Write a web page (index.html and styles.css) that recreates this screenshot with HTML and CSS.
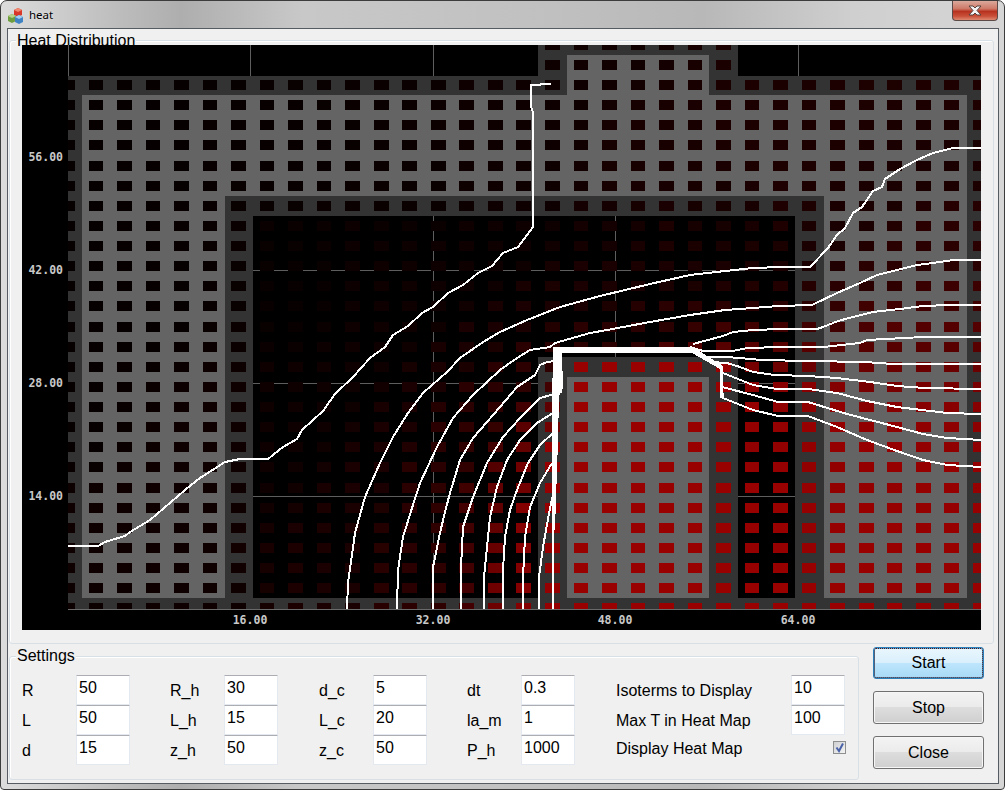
FILE: index.html
```html
<!DOCTYPE html>
<html lang="en">
<head>
    <meta charset="UTF-8">
    <title>heat</title>
    <link rel="stylesheet" href="styles.css">
</head>
<body>
    <div class="window">
        <div class="titlebar">
            <svg class="app-icon" width="16" height="17" viewBox="0 0 16 17">
                <polygon points="6,3 10,1 14,3 14,8 10,10 6,8" fill="#d8372a"/>
                <polygon points="6,3 10,5 14,3 10,1" fill="#f08a70"/>
                <polygon points="0,9 4,7 8,9 8,14 4,16 0,14" fill="#6f9e3f"/>
                <polygon points="0,9 4,11 8,9 4,7" fill="#b5d48a"/>
                <polygon points="7,10 11,8 15,10 15,15 11,17 7,15" fill="#3f83c4"/>
                <polygon points="7,10 11,12 15,10 11,8" fill="#a4cdf0"/>
            </svg>
            <span class="title-text">heat</span>
            <div class="close-btn">
                <svg width="18" height="11" viewBox="0 0 18 11">
                    <path d="M3 1 H7 L9 3 L11 1 H15 L11 5.5 L15 10 H11 L9 8 L7 10 H3 L7 5.5 Z" fill="#f4f4f4" stroke="#55423f" stroke-width="1"/>
                </svg>
            </div>
        </div>

        <div class="client">
            <div class="group heat-group">
                <span class="group-title">Heat Distribution</span>
                <svg id="chart" class="chart" width="959" height="585" viewBox="22 45 959 585" shape-rendering="crispEdges">
                    <rect x="22" y="45" width="959" height="585" fill="#000"/>
                    <g stroke="#5e5e5e" stroke-width="1">
                        <path d="M68.5 45V609M250.5 45V609M433.5 45V609M615.5 45V609M798.5 45V609"/>
                        <path d="M68 270.5H981M68 383.5H981M68 496.5H981"/>
                    </g>
                    <path fill="#333" fill-rule="evenodd" d="M68 76H538V45H738V76H981V609H68Z M253 216H795V598H738V357H538V598H253Z"/>
                    <path fill="#646464" d="M82 95H567V55H709V95H967V598H824V196H225V598H82Z"/>
                    <path fill="#646464" d="M567 377H709V598H567Z"/>
                    <g id="dots"></g>
                    <path d="M68 609.5H981" stroke="#6a6a6a" stroke-width="1"/>
                    <g id="isoterms" fill="none" stroke="#fff" stroke-width="2"></g>
                    <path fill="#fff" d="M553 347H693L723 366V398H720V369L692 353H562L563 388L559 396L558 440L555 530H552V410Z"/>
                    <g class="axis-y">
                        <text x="63" y="161">56.00</text>
                        <text x="63" y="274">42.00</text>
                        <text x="63" y="387">28.00</text>
                        <text x="63" y="500">14.00</text>
                    </g>
                    <g class="axis-x">
                        <text x="250" y="624">16.00</text>
                        <text x="433" y="624">32.00</text>
                        <text x="615" y="624">48.00</text>
                        <text x="798" y="624">64.00</text>
                    </g>
                </svg>
            </div>

            <div class="bottom-row">
                <div class="group settings">
                    <span class="group-title">Settings</span>
                    <div class="setting-col">
                        <label>R</label><input type="text" value="50">
                        <label>L</label><input type="text" value="50">
                        <label>d</label><input type="text" value="15">
                    </div>
                    <div class="setting-col">
                        <label>R_h</label><input type="text" value="30">
                        <label>L_h</label><input type="text" value="15">
                        <label>z_h</label><input type="text" value="50">
                    </div>
                    <div class="setting-col">
                        <label>d_c</label><input type="text" value="5">
                        <label>L_c</label><input type="text" value="20">
                        <label>z_c</label><input type="text" value="50">
                    </div>
                    <div class="setting-col">
                        <label>dt</label><input type="text" value="0.3">
                        <label>la_m</label><input type="text" value="1">
                        <label>P_h</label><input type="text" value="1000">
                    </div>
                    <div class="setting-col wide">
                        <label>Isoterms to Display</label><input type="text" value="10">
                        <label>Max T in Heat Map</label><input type="text" value="100">
                        <label class="check-label">Display Heat Map</label>
                        <span class="check">
                            <svg width="11" height="11" viewBox="0 0 11 11"><path d="M2.5 5.5L5 9L9 1.5" fill="none" stroke="#4a62a8" stroke-width="2"/></svg>
                        </span>
                    </div>
                </div>
                <div class="buttons">
                    <button class="btn focused" type="button">Start</button>
                    <button class="btn" type="button">Stop</button>
                    <button class="btn" type="button">Close</button>
                </div>
            </div>
        </div>
    </div>
    <script src="heat.js"></script>
</body>
</html>
```
FILE: styles.css
```css
html, body {
    margin: 0;
    background: #fff;
    overflow: hidden;
}
body {
    font-family: "Liberation Sans", Arial, sans-serif;
    font-size: 16px;
    color: #000;
}
.window {
    box-sizing: border-box;
    width: 1005px;
    height: 790px;
    border: 1px solid #3c3c3c;
    border-radius: 7px 7px 4px 4px;
    padding: 0 5px 5px 6px;
    background:
        linear-gradient(to right, #dcdcdc 0, #bcbcbc 12%, #aeaeae 18%, #c8c8c8 30%, #c0c0c0 55%, #b8b8b8 70%, #cfcfcf 85%, #d6d6d6 100%);
}
.titlebar {
    display: flex;
    align-items: flex-start;
    height: 27px;
}
.app-icon {
    margin: 6px 0 0 1px;
}
.title-text {
    margin: 6px 0 0 5px;
    font-family: "Noto Sans", sans-serif;
    font-size: 11.5px;
    line-height: 16px;
    text-shadow: 0 0 3px #eee;
}
.close-btn {
    margin-left: auto;
    margin-right: 1px;
    display: flex;
    align-items: center;
    justify-content: center;
    width: 44px;
    height: 19px;
    border: 1px solid #5b4a48;
    border-top: 0;
    border-radius: 0 0 4px 4px;
    background: linear-gradient(to bottom, #dba99c 0, #cf7a68 40%, #b8331f 55%, #c9503a 80%, #dd8a70 100%);
}
.client {
    box-sizing: border-box;
    height: 756px;
    border: 1px solid #565c62;
    background: #f0f0f0;
    padding: 11px 0 0 1px;
}
.group {
    position: relative;
    box-sizing: border-box;
    border: 1px solid #d8e0e6;
    border-radius: 3px;
    box-shadow: inset 1px 1px 0 #fff;
}
.group-title {
    position: absolute;
    left: 6px;
    top: -9px;
    padding: 0 1px;
    background: #f0f0f0;
    line-height: 17px;
    white-space: nowrap;
}
.heat-group {
    width: 985px;
    height: 604px;
    padding: 4px 12px;
}
.chart {
    position: relative;
    display: block;
}
.chart text {
    font-family: "DejaVu Sans Mono", monospace;
    font-size: 11.5px;
    font-weight: bold;
    fill: #c8c8c8;
    shape-rendering: auto;
}
.axis-y text {
    text-anchor: end;
}
.axis-x text {
    text-anchor: middle;
}
.bottom-row {
    display: flex;
    margin-top: 3px;
}
.settings {
    display: flex;
    gap: 40px;
    width: 850px;
    height: 124px;
    margin-top: 9px;
    padding: 18px 0 0 12px;
}
.settings .group-title {
    top: -10px;
}
.setting-col {
    display: grid;
    grid-template-columns: 54px 54px;
    grid-auto-rows: 30px;
    align-items: center;
}
.setting-col:nth-child(even):not(:nth-child(2)) {
    margin-left: 1px;
}
.setting-col.wide {
    grid-template-columns: 175px 54px;
}
.setting-col label {
    padding-top: 2px;
    line-height: 20px;
    white-space: nowrap;
}
.setting-col .check-label {
    padding: 0 0 4px;
    margin-top: 2px;
}
.setting-col input {
    box-sizing: border-box;
    width: 54px;
    height: 30px;
    margin: 0;
    padding: 0 2px 5px;
    border: 1px solid #e3e9ef;
    border-top-color: #abadb3;
    border-radius: 1px;
    background: #fff;
    font: inherit;
    color: #000;
    outline: none;
}
.check {
    box-sizing: border-box;
    display: flex;
    width: 13px;
    height: 13px;
    margin: 0 0 6px 42px;
    border: 1px solid #8e8f8f;
    background: linear-gradient(to bottom right, #cfd0d2, #f4f4f4);
}
.buttons {
    display: flex;
    flex-direction: column;
    gap: 12px;
    margin-left: 14px;
}
.btn {
    box-sizing: border-box;
    width: 111px;
    height: 33px;
    padding: 0;
    border: 1px solid #707070;
    border-radius: 3px;
    background: linear-gradient(to bottom, #f3f3f3 0, #ebebeb 49%, #dddddd 50%, #cfcfcf 100%);
    box-shadow: inset 0 0 0 1px #f6f6f6;
    font: inherit;
    color: #000;
}
.btn.focused {
    height: 32px;
    border-color: #2c7fb8;
    background: linear-gradient(to bottom, #eaf6fd 0, #d9f0fc 49%, #bee6fd 50%, #a7d9f5 100%);
    box-shadow: inset 0 0 0 1px #4fb0e0;
    outline: 1px dotted #5a1010;
    outline-offset: -2px;
}
```
FILE: heat.js
```js
// plot scale, cells are 2.5 units wide
const plot = { left: 68, right: 981, top: 45, bottom: 609 };
const cellW = 28.53;
const cellH = 20.13;

// isoterms, page coordinates, coldest first. red = dot colour next to the line
const isoterms = [
    { red: 0x0e, pts: [[68,546],[98,546],[105,542],[125,536],[130,532],[150,520],[185,490],[200,478],[225,462],[240,459],[268,459],[283,447],[297,439],[302,430],[323,411],[335,394],[353,377],[370,358],[385,347],[393,335],[408,326],[422,313],[433,307],[448,293],[463,285],[478,273],[492,266],[503,253],[518,247],[533,227],[533,140],[533,112],[531,107],[531,85],[540,85],[541,84],[551,84]] },
    { red: 0x1a, pts: [[347,609],[348,583],[355,533],[365,497],[380,463],[393,437],[408,413],[423,393],[447,372],[460,358],[483,342],[500,332],[527,320],[560,307],[600,296],[650,284],[690,275],[725,271],[753,268],[782,267],[810,267],[828,248],[837,235],[845,228],[853,213],[862,207],[873,191],[882,187],[885,179],[900,169],[917,160],[933,153],[953,148],[981,148]] },
    { red: 0x2a, pts: [[397,609],[398,570],[403,537],[412,508],[420,483],[437,447],[453,418],[473,395],[500,370],[517,358],[530,350],[550,347],[555,343],[590,333],[607,330],[650,322],[690,315],[725,310],[753,308],[778,306],[812,305],[837,293],[860,283],[877,275],[897,270],[917,265],[933,263],[953,260],[981,260]] },
    { red: 0x2e, pts: [[433,609],[433,567],[440,533],[445,512],[450,493],[460,460],[473,438],[487,422],[500,407],[517,387],[535,375],[540,365],[547,362],[555,361]] },
    { red: 0x40, pts: [[693,344],[723,336],[733,332],[753,330],[782,329],[817,329],[823,327],[838,321],[853,317],[873,312],[900,309],[923,306],[950,305],[981,305]] },
    { red: 0x42, pts: [[461,609],[461,567],[463,527],[473,497],[487,463],[503,437],[520,418],[540,398],[562,392]] },
    { red: 0x56, pts: [[690,347],[703,351],[733,351],[747,348],[782,347],[823,347],[860,343],[867,340],[923,337],[981,337]] },
    { red: 0x60, pts: [[484,609],[484,577],[487,547],[490,517],[497,487],[507,460],[520,440],[537,423],[553,413]] },
    { red: 0x6a, pts: [[707,357],[727,357],[762,360],[808,361],[865,362],[893,364],[981,364]] },
    { red: 0x72, pts: [[503,609],[503,570],[505,537],[510,510],[517,490],[528,463],[540,445],[553,433]] },
    { red: 0x78, pts: [[710,362],[727,363],[740,367],[753,372],[775,375],[808,376],[837,378],[870,382],[897,386],[925,388],[981,389]] },
    { red: 0x85, pts: [[523,609],[523,577],[525,537],[530,507],[540,483],[552,463]] },
    { red: 0x88, pts: [[723,373],[753,385],[777,389],[808,389],[837,393],[867,401],[897,407],[947,413],[981,414]] },
    { red: 0x90, pts: [[539,609],[539,577],[543,547],[550,508],[553,495]] },
    { red: 0x90, pts: [[722,387],[753,395],[778,402],[808,402],[847,414],[897,427],[923,434],[947,438],[981,440]] },
    { red: 0x96, pts: [[553,609],[553,440]] },
    { red: 0x96, pts: [[722,387],[723,398],[753,410],[778,416],[808,416],[837,427],[867,440],[897,451],[923,460],[947,465],[981,467]] }
];

// extra points so the far corners of the map get a sensible colour
const anchors = [
    [68,45,6],[68,300,6],[68,420,7],[200,45,7],[400,45,10],[600,45,16],[800,45,26],[981,45,30],
    [981,100,31],[800,120,28],[650,150,24],[80,609,12],[200,609,14],[750,609,153],[850,609,153],
    [981,609,153],[770,500,153],[880,540,153],[981,530,153],
    [150,150,7],[300,150,8],[150,300,7],[300,300,8],[420,200,10],[500,170,14],[610,230,20],[720,220,22]
];

function segDist(px, py, a, b) {
    const dx = b[0] - a[0], dy = b[1] - a[1];
    const len = dx * dx + dy * dy;
    let t = len ? ((px - a[0]) * dx + (py - a[1]) * dy) / len : 0;
    t = Math.max(0, Math.min(1, t));
    return Math.hypot(px - a[0] - t * dx, py - a[1] - t * dy) + 1;
}

function redAt(x, y) {
    if (x >= 560 && x <= 745 && y >= 357) return 153;
    let sum = 0, weight = 0;
    for (const iso of isoterms) {
        let d = Infinity;
        for (let i = 1; i < iso.pts.length; i++) {
            d = Math.min(d, segDist(x, y, iso.pts[i - 1], iso.pts[i]));
        }
        const w = 1 / Math.pow(d, 4);
        sum += iso.red * w;
        weight += w;
    }
    for (const a of anchors) {
        const w = 1 / Math.pow(Math.hypot(x - a[0], y - a[1]) + 1, 4);
        sum += a[2] * w;
        weight += w;
    }
    return Math.round(sum / weight);
}

const NS = 'http://www.w3.org/2000/svg';
const dots = document.getElementById('dots');

for (let row = 0; row <= 28; row++) {
    const cy = 608.4 - row * cellH;
    for (let col = 0; col <= 32; col++) {
        const cx = 67.6 + col * cellW;
        // the strip above the body is empty except for the top bump
        if (cy < 76 && (cx < 538 || cx > 738)) continue;
        const x0 = Math.max(plot.left, Math.floor(cx - 7.1));
        const x1 = Math.min(plot.right, Math.round(cx + 7.1));
        const y0 = Math.max(plot.top, Math.round(cy - 5));
        const y1 = Math.min(plot.bottom, Math.round(cy + 5));
        const r = document.createElementNS(NS, 'rect');
        r.setAttribute('x', x0);
        r.setAttribute('y', y0);
        r.setAttribute('width', x1 - x0);
        r.setAttribute('height', y1 - y0);
        r.setAttribute('fill', 'rgb(' + redAt(cx, cy) + ',0,0)');
        dots.appendChild(r);
    }
}

const lines = document.getElementById('isoterms');
for (const iso of isoterms) {
    const p = document.createElementNS(NS, 'polyline');
    p.setAttribute('points', iso.pts.map(pt => pt.join(',')).join(' '));
    lines.appendChild(p);
}
```
